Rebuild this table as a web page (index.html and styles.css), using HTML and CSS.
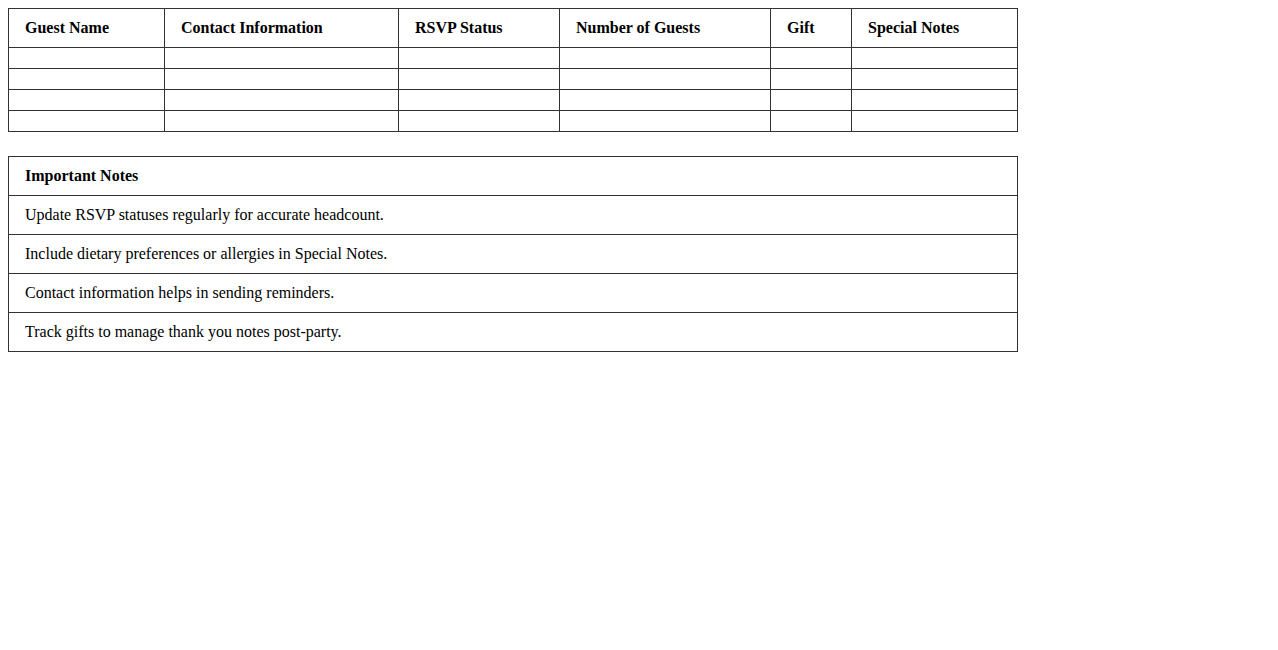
FILE: index.html
```html
<!DOCTYPE html>
<html>
<head>
<meta charset="utf-8">
<link rel="stylesheet" href="styles.css">
</head>
<body>
<table class="guests">
  <colgroup>
    <col class="c1"><col class="c2"><col class="c3"><col class="c4"><col class="c5"><col class="c6">
  </colgroup>
  <thead>
    <tr><th>Guest Name</th><th>Contact Information</th><th>RSVP Status</th><th>Number of Guests</th><th>Gift</th><th>Special Notes</th></tr>
  </thead>
  <tbody>
    <tr><td></td><td></td><td></td><td></td><td></td><td></td></tr>
    <tr><td></td><td></td><td></td><td></td><td></td><td></td></tr>
    <tr><td></td><td></td><td></td><td></td><td></td><td></td></tr>
    <tr><td></td><td></td><td></td><td></td><td></td><td></td></tr>
  </tbody>
</table>
<table class="notes">
  <thead><tr><th>Important Notes</th></tr></thead>
  <tbody>
    <tr><td>Update RSVP statuses regularly for accurate headcount.</td></tr>
    <tr><td>Include dietary preferences or allergies in Special Notes.</td></tr>
    <tr><td>Contact information helps in sending reminders.</td></tr>
    <tr><td>Track gifts to manage thank you notes post-party.</td></tr>
  </tbody>
</table>
</body>
</html>
```
FILE: styles.css
```css
body {
  margin: 8px;
  font-family: "Liberation Serif", "Times New Roman", serif;
  font-size: 16px;
  color: #000;
  background: #fff;
}
table {
  width: 80%;
  border-collapse: collapse;
  table-layout: fixed;
}
th, td {
  border: 1px solid #333;
  padding: 10px 16px;
  text-align: left;
  line-height: 18px;
  height: 0;
}
th { font-weight: bold; }
.guests tbody td { height: 0; padding: 10px 16px 10px; line-height: 0; }
.c1 { width: 156px; }
.c2 { width: 234px; }
.c3 { width: 161px; }
.c4 { width: 211px; }
.c5 { width: 81px; }
.notes { margin-top: 24px; }
```
